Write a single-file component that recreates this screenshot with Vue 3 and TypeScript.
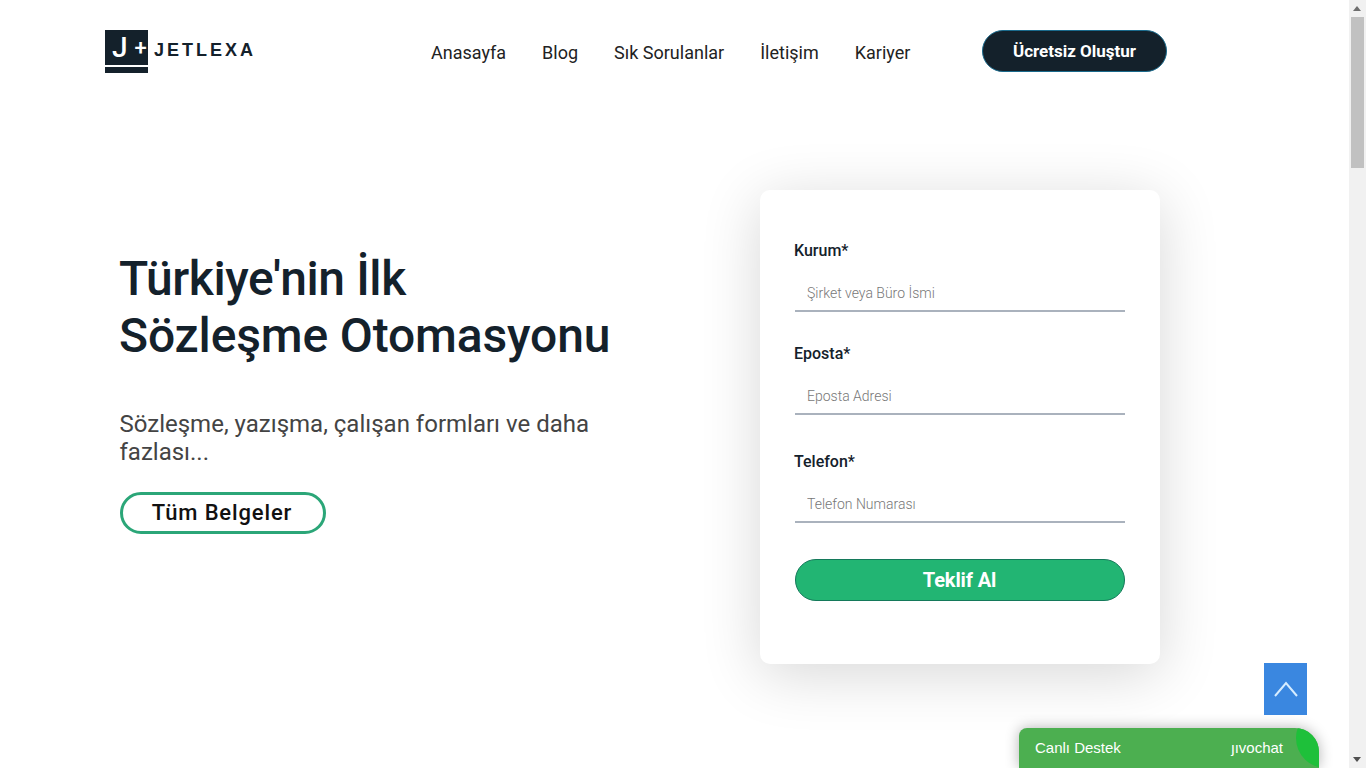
<script setup lang="ts">
interface Field {
  label: string;
  placeholder: string;
}
const links: string[] = ['Anasayfa', 'Blog', 'Sık Sorulanlar', 'İletişim', 'Kariyer']
const fields: Field[] = [
  { label: 'Kurum*', placeholder: 'Şirket veya Büro İsmi' },
  { label: 'Eposta*', placeholder: 'Eposta Adresi' },
  { label: 'Telefon*', placeholder: 'Telefon Numarası' },
]
</script>

<template>
  <div class="shell">
    <div class="page">
      <header class="top">
        <a class="logo" href="#">
          <span class="mark"><span class="mark_j">J</span><span class="mark_plus">+</span></span>
          <span class="wordmark">JETLEXA</span>
        </a>
        <nav class="menu">
          <a v-for="link in links" :key="link" href="#">{{ link }}</a>
        </nav>
        <a class="cta" href="#">Ücretsiz Oluştur</a>
      </header>

      <main class="hero">
        <section class="intro">
          <h1><span class="tight">Türkiye'nin İlk</span><br>Sözleşme Otomasyonu</h1>
          <p>Sözleşme, yazışma, çalışan formları ve daha fazlası...</p>
          <a class="outline" href="#">Tüm Belgeler</a>
        </section>
        <form class="card" @submit.prevent>
          <div v-for="field in fields" :key="field.label" class="field">
            <label>{{ field.label }}</label>
            <input type="text" :placeholder="field.placeholder">
          </div>
          <button type="submit">Teklif Al</button>
        </form>
      </main>
    </div>

    <div class="scrollbar">
      <span class="arrow up"></span>
      <span class="thumb"></span>
      <span class="arrow down"></span>
    </div>

    <a class="totop" href="#">
      <svg width="24" height="16" viewBox="0 0 24 16" fill="none" stroke="#d5ecff" stroke-width="2">
        <path d="M1 15 L12 2 L23 15" />
      </svg>
    </a>

    <div class="chat">
      <span class="chat_title">Canlı Destek</span>
      <span class="chat_brand">ȷıvochat</span>
      <span class="chat_corner"></span>
    </div>
  </div>
</template>

<style scoped>
.shell {
  display: flex;
  height: 768px;
  overflow: hidden;
  position: relative;
  font-family: Roboto, "Liberation Sans", sans-serif;
  color: #14212b;
}
.page {
  flex: 1;
  min-width: 0;
}
.top {
  display: flex;
  align-items: flex-start;
  height: 100px;
  padding: 30px 0 0 105px;
  box-sizing: border-box;
}
.logo {
  display: flex;
  width: 150px;
  text-decoration: none;
  color: #14212b;
}
.mark {
  display: flex;
  align-items: center;
  justify-content: flex-start;
  gap: 7px;
  width: 43px;
  height: 43px;
  box-sizing: border-box;
  padding: 0 0 7px 7px;
  background: linear-gradient(#14212b 0 35px, #fff 35px 37px, #14212b 37px);
  color: #fff;
  flex-shrink: 0;
}
.mark_j {
  font-size: 28px;
  font-weight: 500;
  line-height: 1;
}
.mark_plus {
  font-size: 22px;
  font-weight: 500;
  line-height: 1;
}
.wordmark {
  font-family: "Liberation Sans", sans-serif;
  font-size: 18px;
  font-weight: 700;
  letter-spacing: 3px;
  line-height: 1;
  margin: 11px 0 0 6px;
  white-space: nowrap;
}
.menu {
  display: flex;
  gap: 36px;
  margin: 12px 0 0 176px;
  width: 551px;
}
.menu a {
  font-size: 18px;
  line-height: 22px;
  color: #222;
  text-decoration: none;
}
.cta {
  display: flex;
  align-items: center;
  justify-content: center;
  width: 185px;
  height: 42px;
  box-sizing: border-box;
  border: 1px solid #1a6a8c;
  border-radius: 21px;
  background: #14212b;
  color: #fff;
  font-size: 17px;
  font-weight: 700;
  text-decoration: none;
}
.hero {
  display: flex;
  align-items: flex-start;
  padding: 90px 0 0 119px;
}
.intro {
  width: 501px;
  margin-right: 140px;
  padding-top: 60px;
}
.intro h1 {
  margin: 0;
  font-size: 48px;
  font-weight: 500;
  line-height: 57px;
  letter-spacing: -0.15px;
  color: #14212b;
}
.tight {
  letter-spacing: -0.4px;
}
.intro p {
  margin: 46px 0 0 0.5px;
  width: 490px;
  font-size: 24px;
  line-height: 28px;
  color: #444;
}
.outline {
  display: flex;
  align-items: center;
  justify-content: center;
  width: 206px;
  height: 42px;
  margin: 26px 0 0 1px;
  padding: 0 2px 1px 0;
  box-sizing: border-box;
  border: 3px solid #2ba678;
  border-radius: 21px;
  font-size: 22px;
  font-weight: 500;
  letter-spacing: 0.85px;
  color: #111;
  text-decoration: none;
}
.card {
  width: 400px;
  height: 474px;
  box-sizing: border-box;
  padding: 51px 35px 0;
  background: #fff;
  border-radius: 10px;
  box-shadow: 0 10px 60px rgba(0, 0, 0, 0.16);
}
.field {
  display: flex;
  flex-direction: column;
  margin-bottom: 32px;
}
.field:nth-child(2) {
  margin-bottom: 37px;
}
.field:nth-child(3) {
  margin-bottom: 36px;
}
.field label {
  margin-left: -1px;
  font-size: 16px;
  font-weight: 500;
  line-height: 20px;
  color: #14212b;
}
.field input {
  height: 51px;
  box-sizing: border-box;
  padding: 15px 12px 0;
  border: 0;
  border-bottom: 2px solid #aab2bd;
  outline: none;
  background: none;
  font-family: Roboto, sans-serif;
  font-size: 14px;
  font-weight: 300;
  color: #333;
}
.field input::placeholder {
  color: #777;
  opacity: 1;
}
button {
  display: block;
  width: 330px;
  height: 42px;
  padding: 0 1px 0 0;
  border: 1px solid #14795a;
  border-radius: 21px;
  background: #22b573;
  color: #fff;
  font-family: Roboto, sans-serif;
  font-size: 20px;
  font-weight: 700;
  letter-spacing: -0.1px;
}
.scrollbar {
  flex: 0 0 17px;
  position: relative;
  background: #f1f1f1;
}
.thumb {
  position: absolute;
  top: 17px;
  left: 2px;
  width: 13px;
  height: 151px;
  background: #c1c1c1;
}
.arrow {
  position: absolute;
  left: 4px;
  border-left: 4px solid transparent;
  border-right: 4px solid transparent;
}
.arrow.up {
  top: 6px;
  border-bottom: 5px solid #6e6e6e;
}
.arrow.down {
  bottom: 6px;
  border-top: 5px solid #505050;
}
.totop {
  position: absolute;
  left: 1264px;
  top: 663px;
  display: flex;
  align-items: center;
  justify-content: center;
  width: 43px;
  height: 52px;
  background: #3a87e0;
}
.chat {
  position: absolute;
  left: 1019px;
  top: 728px;
  width: 300px;
  height: 40px;
  box-sizing: border-box;
  padding: 0 36px 2px 16px;
  display: flex;
  align-items: center;
  justify-content: space-between;
  background: #4caf50;
  border-radius: 8px 24px 0 0;
  box-shadow: 0 0 14px rgba(0, 0, 0, 0.3);
  overflow: hidden;
  font-family: "Liberation Sans", Arial, sans-serif;
  color: #fff;
  font-size: 15px;
}
.chat_corner {
  position: absolute;
  left: 277px;
  top: -20px;
  width: 60px;
  height: 60px;
  border-radius: 50%;
  background: #1ec03a;
}
</style>

<style>
html, body {
  margin: 0;
  overflow: hidden;
  background: #fff;
}
</style>
